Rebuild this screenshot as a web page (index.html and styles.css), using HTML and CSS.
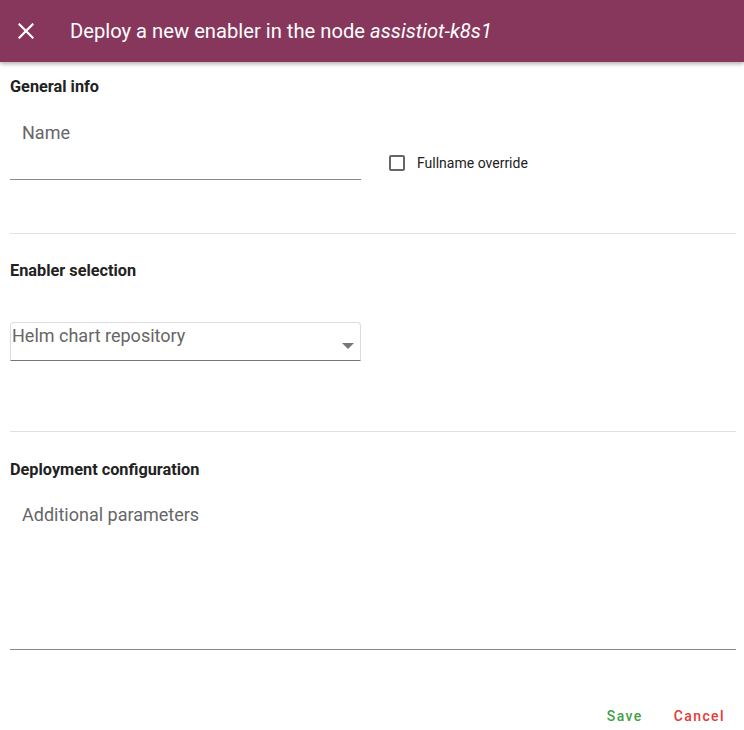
FILE: index.html
```html
<!DOCTYPE html>
<html>
<head>
<meta charset="utf-8">
<link rel="stylesheet" href="styles.css">
</head>
<body>
<header class="bar">
  <svg class="close" width="16" height="16" viewBox="0 0 16 16"><path d="M1.5 1.5 L14.5 14.5 M14.5 1.5 L1.5 14.5" stroke="#fff" stroke-width="2.2" stroke-linecap="square"/></svg>
  <h1 class="title">Deploy a new enabler in the node <em>assistiot-k8s1</em></h1>
</header>
<main class="content">
  <section class="section s1">
    <h2 class="heading">General info</h2>
    <div class="row">
      <div class="field name-field"><span class="label">Name</span></div>
      <label class="check"><span class="box"></span><span>Fullname override</span></label>
    </div>
  </section>
  <hr class="divider">
  <section class="section s2">
    <h2 class="heading">Enabler selection</h2>
    <div class="select">
      <span class="select-text">Helm chart repository</span>
      <svg class="arrow" width="14" height="8" viewBox="0 0 14 8"><path d="M1 1 L13 1 L7 7 Z" fill="#777"/></svg>
    </div>
  </section>
  <hr class="divider">
  <section class="section s3">
    <h2 class="heading">Deployment configuration</h2>
    <div class="field area-field"><span class="label">Additional parameters</span></div>
  </section>
  <div class="actions">
    <button class="btn save">Save</button>
    <button class="btn cancel">Cancel</button>
  </div>
</main>
</body>
</html>
```
FILE: styles.css
```css
* { box-sizing: border-box; }
body {
  margin: 0;
  font-family: Roboto, "Liberation Sans", sans-serif;
  background: #fff;
  color: #222;
}
.bar {
  height: 62px;
  background: #87375b;
  display: flex;
  align-items: center;
  padding-left: 18px;
  box-shadow: 0 2px 4px rgba(0,0,0,0.3);
}
.close { flex: none; }
.title {
  margin: 0 0 0 36px;
  font-size: 20.2px;
  font-weight: 400;
  color: #fff;
}
.title em { font-style: italic; }
.content { padding: 0 8px 0 10px; }
.heading {
  margin: 0;
  font-size: 16.3px;
  font-weight: 700;
  line-height: 18px;
  color: #222;
}
.s1 { padding-top: 16px; }
.row {
  display: flex;
  align-items: flex-start;
  margin-top: 14px;
}
.field {
  position: relative;
  border-bottom: 1px solid #8a8a8a;
}
.label {
  display: block;
  padding-left: 12px;
  font-size: 18px;
  color: #666;
  line-height: 22px;
}
.name-field {
  width: 351px;
  height: 70px;
  padding-top: 12px;
}
.check {
  display: flex;
  align-items: center;
  margin-left: 28px;
  margin-top: 45px;
  font-size: 14px;
  color: #222;
}
.box {
  width: 16px;
  height: 16px;
  border: 2px solid #666;
  border-radius: 2px;
  margin-right: 12px;
}
.divider {
  border: 0;
  border-top: 1px solid #e0e0e0;
  margin: 53px 0 0 0;
}
.s2 { padding-top: 28px; }
.select {
  margin-top: 42px;
  width: 351px;
  height: 39px;
  border: 1px solid #dcdcdc;
  border-bottom: 1px solid #777;
  border-radius: 4px 4px 0 0;
  display: flex;
  justify-content: space-between;
  padding: 2px 5px 0 1px;
}
.select-text {
  font-size: 18px;
  line-height: 22px;
  color: #666;
}
.arrow { margin-top: 17px; }
.s2 + .divider { margin-top: 70px; }
.s3 { padding-top: 29px; }
.area-field {
  margin-top: 25px;
  height: 146px;
  padding-top: 0;
}
.actions {
  display: flex;
  justify-content: flex-end;
  margin-top: 57px;
  padding-right: 3px;
}
.btn {
  background: none;
  border: 0;
  font-family: Roboto, "Liberation Sans", sans-serif;
  font-size: 14px;
  font-weight: 500;
  letter-spacing: 1.4px;
  padding: 0 8px;
  line-height: 18px;
}
.save { color: #43a047; margin-right: 15px; }
.cancel { color: #e53935; }
```
